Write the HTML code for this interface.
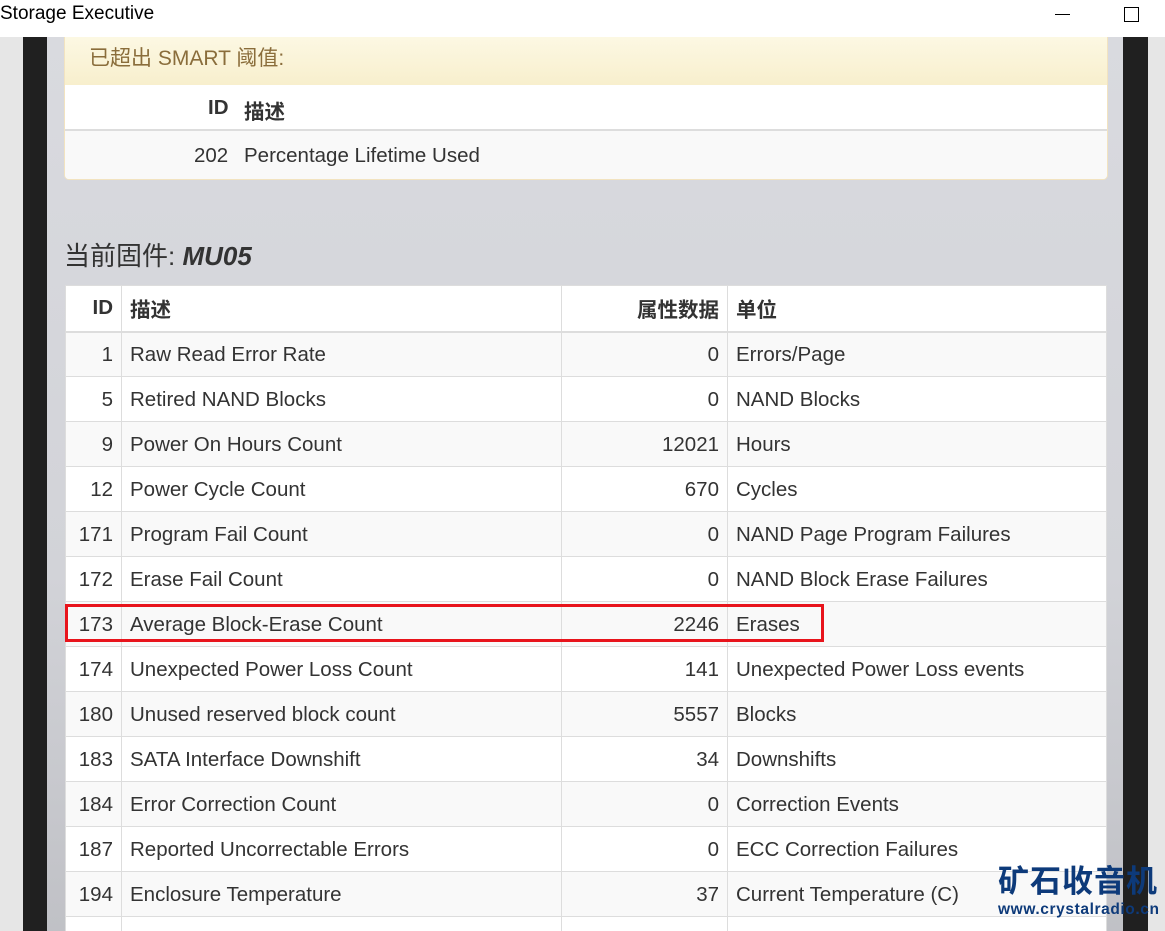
<!DOCTYPE html>
<html style="width:1165px;height:931px;overflow:hidden"><head><meta charset="utf-8"><style>
*{box-sizing:border-box;margin:0;padding:0}
body{width:1165px;height:931px;overflow:hidden;background:#e6e6e6;font-family:"Liberation Sans","Noto Sans CJK SC",sans-serif;color:#333;position:relative}
.title{position:absolute;left:0;top:0;width:1165px;height:37px;background:#fff;font-size:19px;color:#000;padding:3px 0 0 0}
.min{position:absolute;left:1055px;top:14px;width:15px;height:1px;background:#000}
.max{position:absolute;left:1124px;top:7px;width:15px;height:15px;border:1px solid #000}
.bl{position:absolute;top:37px;height:894px;background:#202020}
.content{position:absolute;left:47px;top:37px;width:1076px;height:894px;background:linear-gradient(#d9dadf,#d2d3d8 60%,#c0c1c6)}
.warn{position:absolute;left:64px;top:37px;width:1044px;height:143px;border:1px solid #f2e3c0;border-top:none;border-radius:0 0 5px 5px;background:#fff;overflow:hidden}
.wh{height:48px;background:linear-gradient(#fcf8e3,#f8efcd);color:#8a6d3b;font-size:21px;padding:5px 0 0 24px}
.r{position:absolute;font-size:20.5px}
.wrap{position:absolute;left:65px;top:285px;width:1042px;height:646px;overflow:hidden}
table{width:1042px;border-collapse:collapse;background:#fff;font-size:20.5px}
td,th{border:1px solid #ddd;height:45px;padding:2px 8px 0;white-space:nowrap}
th{font-weight:bold;height:46px;border-bottom:2px solid #ddd;text-align:left;padding-top:0}
tr:nth-child(even) td{background:#f9f9f9}
.n{text-align:right}
.red{position:absolute;left:65px;top:604px;width:759px;height:38px;border:3.5px solid #e8141c}
.wm{position:absolute;left:998px;top:864px;color:#0d3a7a;font-weight:bold}
</style></head><body>
<div class="title">Storage Executive</div>
<div class="min"></div><div class="max"></div>
<div class="bl" style="left:23px;width:24px"></div>
<div class="bl" style="left:1123px;width:25px"></div>
<div class="content"></div>
<div class="warn">
<div class="wh">已超出 SMART 阈值:</div>
<div style="height:46px;border-bottom:2px solid #ddd"></div>
<div style="height:48px;background:#f9f9f9"></div>
</div>
<div class="r" style="left:208px;top:96px;font-weight:bold">ID</div>
<div class="r" style="left:244px;top:95px;font-weight:bold">描述</div>
<div class="r" style="left:194px;top:144px">202</div>
<div class="r" style="left:244px;top:144px">Percentage Lifetime Used</div>
<div style="position:absolute;left:64px;top:236px;font-size:26px">当前固件: <b><i>MU05</i></b></div>
<div class="wrap"><table>
<tr><th class="n" style="width:56px">ID</th><th style="width:440px">描述</th><th class="n" style="width:166px">属性数据</th><th>单位</th></tr>
<tr><td class="n">1</td><td>Raw Read Error Rate</td><td class="n">0</td><td>Errors/Page</td></tr>
<tr><td class="n">5</td><td>Retired NAND Blocks</td><td class="n">0</td><td>NAND Blocks</td></tr>
<tr><td class="n">9</td><td>Power On Hours Count</td><td class="n">12021</td><td>Hours</td></tr>
<tr><td class="n">12</td><td>Power Cycle Count</td><td class="n">670</td><td>Cycles</td></tr>
<tr><td class="n">171</td><td>Program Fail Count</td><td class="n">0</td><td>NAND Page Program Failures</td></tr>
<tr><td class="n">172</td><td>Erase Fail Count</td><td class="n">0</td><td>NAND Block Erase Failures</td></tr>
<tr><td class="n">173</td><td>Average Block-Erase Count</td><td class="n">2246</td><td>Erases</td></tr>
<tr><td class="n">174</td><td>Unexpected Power Loss Count</td><td class="n">141</td><td>Unexpected Power Loss events</td></tr>
<tr><td class="n">180</td><td>Unused reserved block count</td><td class="n">5557</td><td>Blocks</td></tr>
<tr><td class="n">183</td><td>SATA Interface Downshift</td><td class="n">34</td><td>Downshifts</td></tr>
<tr><td class="n">184</td><td>Error Correction Count</td><td class="n">0</td><td>Correction Events</td></tr>
<tr><td class="n">187</td><td>Reported Uncorrectable Errors</td><td class="n">0</td><td>ECC Correction Failures</td></tr>
<tr><td class="n">194</td><td>Enclosure Temperature</td><td class="n">37</td><td>Current Temperature (C)</td></tr>
<tr><td></td><td></td><td></td><td></td></tr>
</table></div>
<div class="red"></div>
<div class="wm"><div style="font-size:31px;letter-spacing:1px;line-height:36px">矿石收音机</div><div style="font-size:15.5px;line-height:20px;letter-spacing:0.6px">www.crystalradio.cn</div></div>
</body></html>
